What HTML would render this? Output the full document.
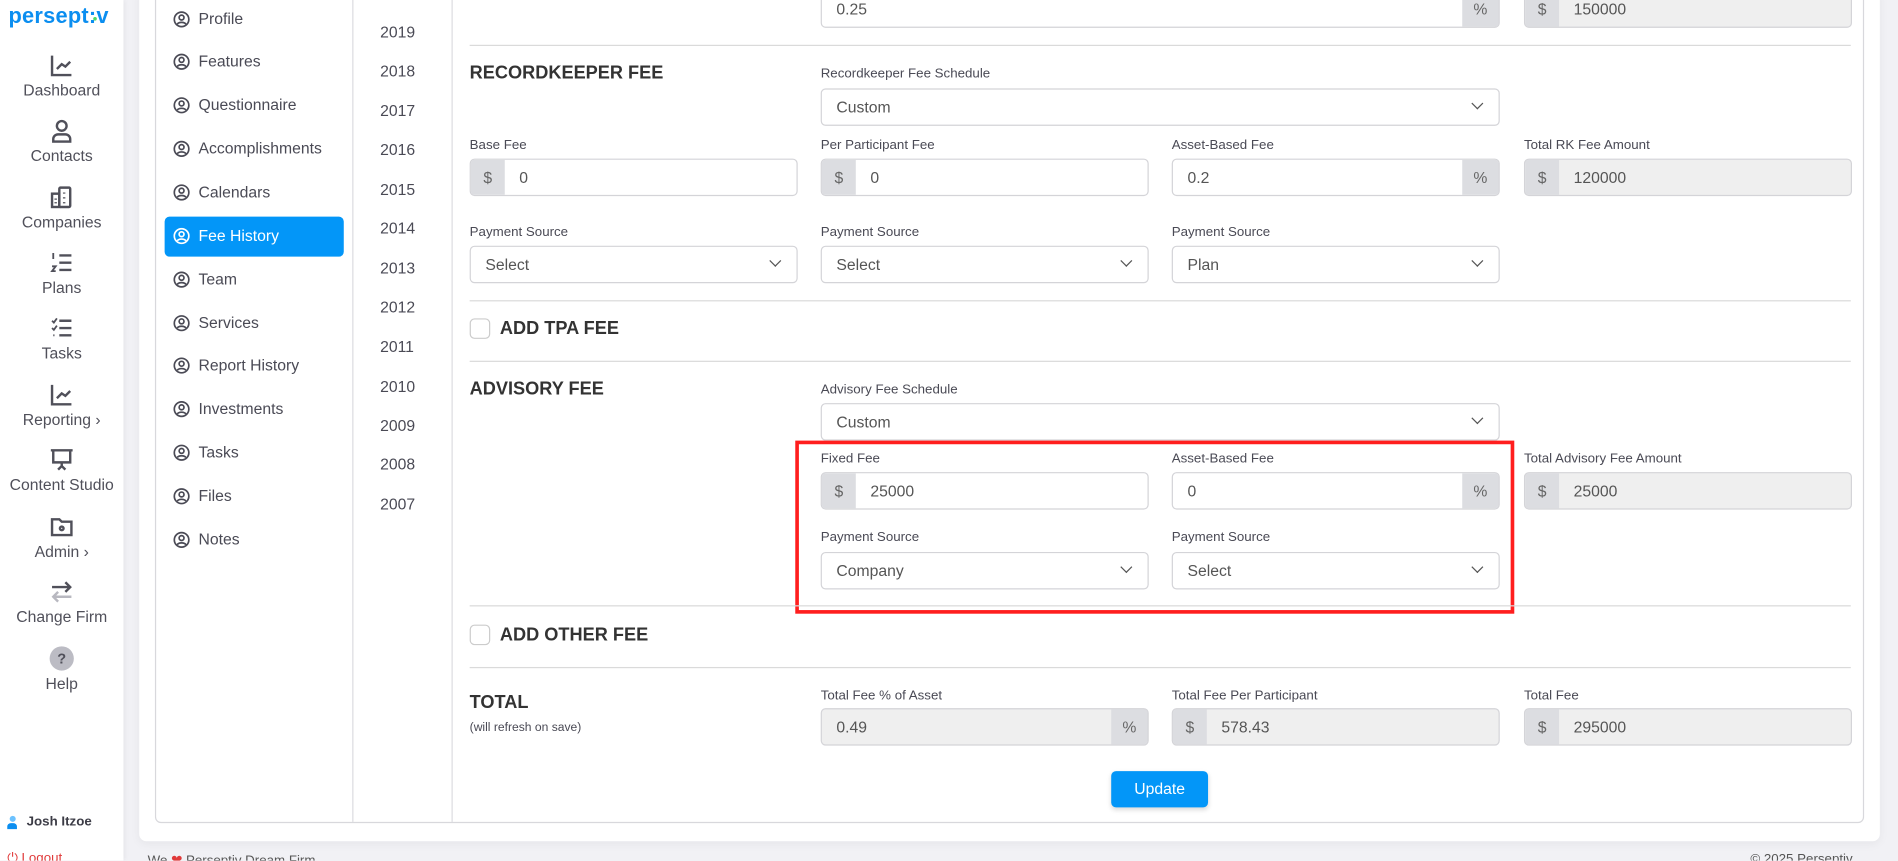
<!DOCTYPE html>
<html><head><meta charset="utf-8">
<style>
html,body{margin:0;padding:0;width:1898px;height:861px;overflow:hidden;background:#f1f1f5;font-family:"Liberation Sans",sans-serif;}
#w{position:absolute;left:0;top:0;width:1568px;height:711px;transform:scale(1.21046);transform-origin:0 0;background:#f1f1f5;overflow:hidden;}
.a{position:absolute;}
.side{left:0;top:0;width:102px;height:711px;background:#fff;box-shadow:1px 0 4px rgba(0,0,0,.06);}
.ni{position:absolute;left:0;width:102px;text-align:center;font-size:13px;color:#50505a;}
.ni svg{display:block;margin:0 auto 3px;}
.card{left:115px;top:-10px;width:1438px;height:705px;background:#fff;border-radius:6px;box-shadow:0 2px 8px rgba(0,0,0,.05);}
.inner{left:128px;top:-10px;width:1412px;height:690px;border:1px solid #d8d8dc;border-radius:5px;box-sizing:border-box;}
.vl{top:-10px;width:1px;height:689px;background:#dcdce0;}
.sn{position:absolute;left:143px;font-size:13px;color:#4a4a55;height:20px;line-height:20px;}
.sn svg{vertical-align:-3px;margin-right:7px;}
.yr{position:absolute;left:314px;font-size:13px;color:#4a4a55;}
.lbl{position:absolute;font-size:11px;color:#4a4a55;}
.inp{position:absolute;height:31px;width:271px;border:1px solid #d4d4d8;border-radius:4px;box-sizing:border-box;background:#fff;font-size:13px;color:#555;line-height:29px;padding-left:12px;overflow:hidden;}
.inp.g{background:#efefef;}
.inp .pre{position:absolute;left:0;top:0;width:28px;height:29px;background:#dcdde1;text-align:center;color:#666;}
.inp .suf{position:absolute;right:0;top:0;width:30px;height:29px;background:#dcdde1;text-align:center;color:#666;}
.inp.p{padding-left:40px;}
.inp .chev{position:absolute;right:14px;top:8px;width:6px;height:6px;border-right:1.3px solid #555;border-bottom:1.3px solid #555;transform:rotate(45deg);}
.hr{position:absolute;left:388px;width:1141px;height:1px;background:#dadada;}
.h{position:absolute;left:388px;font-size:15px;font-weight:bold;color:#333;}
.cb{position:absolute;left:388px;width:17px;height:17px;border:1px solid #ccc;border-radius:4px;box-sizing:border-box;}
</style></head><body><div id="w">
<div class="a side"></div>
<div class="a" style="left:7px;top:3px;font-size:18px;font-weight:bold;color:#0b8ef0;letter-spacing:0.2px">persept<span style="color:#0b8ef0">:</span>v</div>
<div class="a" style="left:77px;top:14px;width:3px;height:3px;background:#4cd964;border-radius:50%"></div>

<div class="ni" style="top:44px"><svg width="20" height="20" viewBox="0 0 20 20" fill="none" stroke="#50505a" stroke-width="2"><path d="M2 2v16h16"/><path d="M6 13l4-4 3 2 4-4"/></svg>Dashboard</div>
<div class="ni" style="top:98px"><svg width="20" height="20" viewBox="0 0 20 20" fill="none" stroke="#50505a" stroke-width="2"><circle cx="10" cy="6" r="4"/><path d="M3 19v-2a4 4 0 0 1 4-4h6a4 4 0 0 1 4 4v2z"/></svg>Contacts</div>
<div class="ni" style="top:153px"><svg width="20" height="20" viewBox="0 0 20 20" fill="none" stroke="#50505a" stroke-width="2"><rect x="2" y="7" width="6" height="11"/><rect x="8" y="2" width="9" height="16" rx="1"/><path d="M12 6v1M12 10v1M12 14v1M5 11v1M5 14v1"/></svg>Companies</div>
<div class="ni" style="top:207px"><svg width="20" height="20" viewBox="0 0 20 20" fill="none" stroke="#50505a" stroke-width="2"><path d="M8 4h10M8 10h10M8 16h10"/><path d="M3 2v5M2 13h3l-3 4h3" stroke-width="1.5"/></svg>Plans</div>
<div class="ni" style="top:261px"><svg width="20" height="20" viewBox="0 0 20 20" fill="none" stroke="#50505a" stroke-width="2"><path d="M8 4h10M8 10h10M8 16h10"/><path d="M2 4l1.5 1.5L6 2M2 10l1.5 1.5L6 8M3 16h1" stroke-width="1.5"/></svg>Tasks</div>
<div class="ni" style="top:316px"><svg width="20" height="20" viewBox="0 0 20 20" fill="none" stroke="#50505a" stroke-width="2"><path d="M2 2v16h16"/><path d="M6 13l4-4 3 2 4-4"/></svg>Reporting &#8250;</div>
<div class="ni" style="top:370px"><svg width="20" height="20" viewBox="0 0 20 20" fill="none" stroke="#50505a" stroke-width="2"><path d="M1 2h18M3 2v10h14V2M10 12v3M7 18l3-3 3 3"/></svg>Content Studio</div>
<div class="ni" style="top:425px"><svg width="20" height="20" viewBox="0 0 20 20" fill="none" stroke="#50505a" stroke-width="2"><path d="M2 4h6l2 2h8v11H2z"/><circle cx="10" cy="11.5" r="1.5"/></svg>Admin &#8250;</div>
<div class="ni" style="top:479px"><svg width="20" height="20" viewBox="0 0 20 20" fill="none" stroke-width="2"><path d="M2 6h15M13 2l4 4-4 4" stroke="#50505a"/><path d="M18 14H3M7 10l-4 4 4 4" stroke="#b8b8c0"/></svg>Change Firm</div>
<div class="ni" style="top:534px"><div style="width:20px;height:20px;border-radius:50%;background:#bcbcc4;margin:0 auto 3px;color:#50505a;font-size:12px;font-weight:bold;line-height:20px">?</div>Help</div>
<div class="a" style="left:6px;top:674px;width:8px;height:12px"><div style="width:5px;height:5px;border-radius:50%;background:#6cc2ff;margin:0 auto"></div><div style="width:8px;height:5px;background:#0b8ef0;border-radius:3px 3px 0 0;margin-top:1px"></div></div>
<div class="a" style="left:22px;top:673px;font-size:11px;font-weight:bold;color:#3c3c46">Josh Itzoe</div>
<div class="a" style="left:6px;top:703px;font-size:11px;color:#e03a3a">&#x23FB; Logout</div>

<div class="a card"></div>
<div class="a inner"></div>
<div class="a vl" style="left:291px"></div>
<div class="a vl" style="left:373px"></div>

<svg width="0" height="0" style="position:absolute"><defs><symbol id="pi" viewBox="0 0 14 14"><g fill="none" stroke="currentColor" stroke-width="1.4"><circle cx="7" cy="7" r="6"/><circle cx="7" cy="5.5" r="2"/><path d="M3.5 11c1-2 6-2 7 0"/></g></symbol></defs></svg>
<div class="sn" style="top:6px"><svg width="14" height="14"><use href="#pi"/></svg>Profile</div>
<div class="sn" style="top:41px"><svg width="14" height="14"><use href="#pi"/></svg>Features</div>
<div class="sn" style="top:77px"><svg width="14" height="14"><use href="#pi"/></svg>Questionnaire</div>
<div class="sn" style="top:113px"><svg width="14" height="14"><use href="#pi"/></svg>Accomplishments</div>
<div class="sn" style="top:149px"><svg width="14" height="14"><use href="#pi"/></svg>Calendars</div>
<div class="a" style="left:136px;top:179px;width:148px;height:33px;background:#0396f8;border-radius:4px"></div>
<div class="sn" style="top:185px;color:#fff"><svg width="14" height="14"><use href="#pi"/></svg>Fee History</div>
<div class="sn" style="top:221px"><svg width="14" height="14"><use href="#pi"/></svg>Team</div>
<div class="sn" style="top:257px"><svg width="14" height="14"><use href="#pi"/></svg>Services</div>
<div class="sn" style="top:292px"><svg width="14" height="14"><use href="#pi"/></svg>Report History</div>
<div class="sn" style="top:328px"><svg width="14" height="14"><use href="#pi"/></svg>Investments</div>
<div class="sn" style="top:364px"><svg width="14" height="14"><use href="#pi"/></svg>Tasks</div>
<div class="sn" style="top:400px"><svg width="14" height="14"><use href="#pi"/></svg>Files</div>
<div class="sn" style="top:436px"><svg width="14" height="14"><use href="#pi"/></svg>Notes</div>

<div class="yr" style="top:19px">2019</div>
<div class="yr" style="top:51px">2018</div>
<div class="yr" style="top:84px">2017</div>
<div class="yr" style="top:116px">2016</div>
<div class="yr" style="top:149px">2015</div>
<div class="yr" style="top:181px">2014</div>
<div class="yr" style="top:214px">2013</div>
<div class="yr" style="top:246px">2012</div>
<div class="yr" style="top:279px">2011</div>
<div class="yr" style="top:312px">2010</div>
<div class="yr" style="top:344px">2009</div>
<div class="yr" style="top:376px">2008</div>
<div class="yr" style="top:409px">2007</div>

<div class="inp" style="left:678px;top:-8px;width:561px">0.25<span class="suf">%</span></div>
<div class="inp g p" style="left:1259px;top:-8px">150000<span class="pre">$</span></div>
<div class="hr" style="top:37px"></div>

<div class="h" style="top:52px">RECORDKEEPER FEE</div>
<div class="lbl" style="left:678px;top:55px">Recordkeeper Fee Schedule</div>
<div class="inp" style="left:678px;top:73px;width:561px">Custom<span class="chev"></span></div>
<div class="lbl" style="left:388px;top:114px">Base Fee</div>
<div class="lbl" style="left:678px;top:114px">Per Participant Fee</div>
<div class="lbl" style="left:968px;top:114px">Asset-Based Fee</div>
<div class="lbl" style="left:1259px;top:114px">Total RK Fee Amount</div>
<div class="inp p" style="left:388px;top:131px">0<span class="pre">$</span></div>
<div class="inp p" style="left:678px;top:131px">0<span class="pre">$</span></div>
<div class="inp" style="left:968px;top:131px">0.2<span class="suf">%</span></div>
<div class="inp g p" style="left:1259px;top:131px">120000<span class="pre">$</span></div>
<div class="lbl" style="left:388px;top:186px">Payment Source</div>
<div class="lbl" style="left:678px;top:186px">Payment Source</div>
<div class="lbl" style="left:968px;top:186px">Payment Source</div>
<div class="inp" style="left:388px;top:203px">Select<span class="chev"></span></div>
<div class="inp" style="left:678px;top:203px">Select<span class="chev"></span></div>
<div class="inp" style="left:968px;top:203px">Plan<span class="chev"></span></div>
<div class="hr" style="top:248px"></div>

<div class="cb" style="top:263px"></div>
<div class="h" style="left:413px;top:263px">ADD TPA FEE</div>
<div class="hr" style="top:298px"></div>

<div class="h" style="top:313px">ADVISORY FEE</div>
<div class="lbl" style="left:678px;top:316px">Advisory Fee Schedule</div>
<div class="inp" style="left:678px;top:333px;width:561px">Custom<span class="chev"></span></div>
<div class="a" style="left:657px;top:364px;width:594px;height:143px;border:3px solid #ff1e1e;box-sizing:border-box"></div>
<div class="lbl" style="left:678px;top:373px">Fixed Fee</div>
<div class="lbl" style="left:968px;top:373px">Asset-Based Fee</div>
<div class="lbl" style="left:1259px;top:373px">Total Advisory Fee Amount</div>
<div class="inp p" style="left:678px;top:390px">25000<span class="pre">$</span></div>
<div class="inp" style="left:968px;top:390px">0<span class="suf">%</span></div>
<div class="inp g p" style="left:1259px;top:390px">25000<span class="pre">$</span></div>
<div class="lbl" style="left:678px;top:438px">Payment Source</div>
<div class="lbl" style="left:968px;top:438px">Payment Source</div>
<div class="inp" style="left:678px;top:456px">Company<span class="chev"></span></div>
<div class="inp" style="left:968px;top:456px">Select<span class="chev"></span></div>
<div class="hr" style="top:500px"></div>

<div class="cb" style="top:516px"></div>
<div class="h" style="left:413px;top:516px">ADD OTHER FEE</div>
<div class="hr" style="top:551px"></div>

<div class="h" style="top:572px">TOTAL</div>
<div class="lbl" style="left:388px;top:596px;font-size:10px">(will refresh on save)</div>
<div class="lbl" style="left:678px;top:569px">Total Fee % of Asset</div>
<div class="lbl" style="left:968px;top:569px">Total Fee Per Participant</div>
<div class="lbl" style="left:1259px;top:569px">Total Fee</div>
<div class="inp g" style="left:678px;top:585px">0.49<span class="suf">%</span></div>
<div class="inp g p" style="left:968px;top:585px">578.43<span class="pre">$</span></div>
<div class="inp g p" style="left:1259px;top:585px">295000<span class="pre">$</span></div>
<div class="a" style="left:918px;top:637px;width:80px;height:30px;background:#0396f8;border-radius:4px;color:#fff;font-size:13px;text-align:center;line-height:30px;box-shadow:0 2px 4px rgba(0,0,0,.15)">Update</div>

<div class="a" style="left:122px;top:704px;font-size:11px;color:#555">We <span style="color:#e03a3a">&#10084;</span> Perseptiv Dream Firm</div>
<div class="a" style="left:1446px;top:704px;font-size:11px;color:#555">&#169; 2025 Perseptiv</div>
</div></body></html>
